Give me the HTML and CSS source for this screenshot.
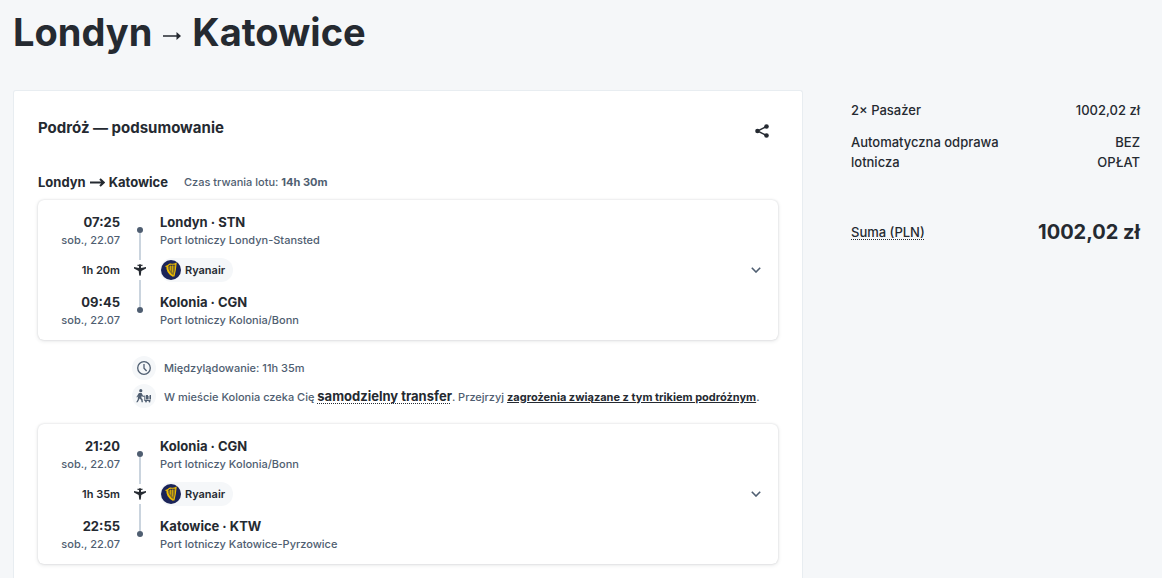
FILE: index.html
```html
<!DOCTYPE html>
<html lang="pl">
<head>
  <meta charset="UTF-8" />
  <meta name="viewport" content="width=device-width, initial-scale=1.0"/>
  <title>Londyn – Katowice</title>
  <link rel="stylesheet" href="styles.css">
</head>
<body>
  <!-- Ikony -->
  <svg class="sprite" aria-hidden="true">
    <symbol id="icon-plane" viewBox="0 0 12 12">
      <path d="M3.400 0.700h1.900L5.500 0h1l0.200 0.700h1.900v1L7 2l0.100 1.900L12 2.900v1.500L7.300 7.100 6.800 11.300 6 12l-0.800-0.700-0.500-4.200L0 4.400V2.900l4.900 1L5 2l-1.600-0.300z"/>
    </symbol>
    <symbol id="icon-harp" viewBox="0 0 20 20">
      <circle cx="10" cy="10" r="10" fill="#1b2458"/>
      <path d="M7.500 6.800c1.800-1.500 4-1.200 6.700-1.600-0.200 3.900-0.800 7-1.500 10.200-3-1.800-5.300-4.600-5.200-8.600z" fill="#857026"/>
      <path d="M4.500 6.300c1.800 0.600 2.900-2 5.100-2.100 2 0 3.300 0.500 5.400-0.800-0.300 4.700-0.900 8.800-2.100 12.900" fill="none" stroke="#edbb00" stroke-width="1.200"/>
      <path d="M6.400 6.200c-0.500 4.600 2.200 8 6.200 10" fill="none" stroke="#edbb00" stroke-width="2"/>
      <path d="M9.500 5.500v5M11.500 5.500v7" fill="none" stroke="#edbb00" stroke-width="0.700"/>
    </symbol>
    <symbol id="icon-chevron" viewBox="0 0 10 6">
      <path d="M0.800 0.800L5 5l4.200-4.200" fill="none" stroke="currentColor" stroke-width="1.600"/>
    </symbol>
  </svg>

  <main class="page">
    <h1>Londyn
      <svg class="title-arrow" viewBox="0 0 18 10" aria-hidden="true"><path d="M0 4.200h13.500V1l4.500 4-4.500 4V5.800H0z"/></svg>
      Katowice</h1>

    <div class="columns">
      <!-- Podsumowanie podróży -->
      <section class="trip">
        <header class="trip-header">
          <h2>Podróż — podsumowanie</h2>
          <button class="share" aria-label="Udostępnij">
            <svg viewBox="0 0 14 14" aria-hidden="true">
              <path d="M11.500 2.500L2.500 7l9 4.500" fill="none" stroke="currentColor" stroke-width="1.400"/>
              <circle cx="11.500" cy="2.500" r="2.300"/><circle cx="2.500" cy="7" r="2.300"/><circle cx="11.500" cy="11.500" r="2.300"/>
            </svg>
          </button>
        </header>

        <div class="route">
          <h3>Londyn
            <svg class="route-arrow" viewBox="0 0 15 9" aria-hidden="true"><path d="M0 4.500h13.500M10 1l3.700 3.500L10 8"/></svg>
            Katowice</h3>
          <p>Czas trwania lotu: <strong>14h 30m</strong></p>
        </div>

        <article class="segment">
          <div class="departure time"><b>07:25</b><span>sob., 22.07</span></div>
          <div class="departure place"><b>Londyn · STN</b><span>Port lotniczy Londyn-Stansted</span></div>
          <div class="duration">1h 20m</div>
          <div class="timeline"><i class="dot"></i><i class="line"></i><svg class="plane"><use href="#icon-plane"/></svg><i class="line"></i><i class="dot"></i></div>
          <div class="carrier"><svg><use href="#icon-harp"/></svg>Ryanair</div>
          <div class="arrival time"><b>09:45</b><span>sob., 22.07</span></div>
          <div class="arrival place"><b>Kolonia · CGN</b><span>Port lotniczy Kolonia/Bonn</span></div>
          <button class="expand" aria-label="Szczegóły lotu"><svg><use href="#icon-chevron"/></svg></button>
        </article>

        <ul class="layover">
          <li>
            <span class="badge">
              <svg viewBox="0 0 16 16" aria-hidden="true"><path d="M8 4v4.200l2.600 2.800M14.300 8A6.300 6.300 0 1 1 1.700 8a6.300 6.300 0 0 1 12.600 0z" fill="none" stroke="currentColor" stroke-width="1.300"/></svg>
            </span>
            <p>Międzylądowanie: 11h 35m</p>
          </li>
          <li>
            <span class="badge">
              <svg viewBox="0 0 16 16" aria-hidden="true">
                <circle cx="4.800" cy="2.700" r="1.600"/>
                <path d="M2.900 5h2.700l1.300 2.500 1.500 0.400v1L6.200 8.500l-0.500-0.800-0.300 2.200 1.200 1.400 0.300 3H5.600l-0.400-2.400-1.600-1.300-0.800 1.600-1.200 2.100H0.200l1.500-2.800L2.200 7.800 1.500 9.300H0.300z"/>
                <path d="M8.300 7.500h1.100V12h5.100v1H8.300zM10 7h2v4.500h-2zM12.400 8h0.800v3.500h-0.800zM13.600 7h1.400v4.500h-1.400z"/>
                <circle cx="10" cy="13.600" r="0.900"/><circle cx="13.500" cy="13.600" r="0.900"/>
              </svg>
            </span>
            <p>W mieście Kolonia czeka Cię <button class="hint">samodzielny transfer</button>. Przejrzyj <a href="#">zagrożenia związane z tym trikiem podróżnym</a>.</p>
          </li>
        </ul>

        <article class="segment">
          <div class="departure time"><b>21:20</b><span>sob., 22.07</span></div>
          <div class="departure place"><b>Kolonia · CGN</b><span>Port lotniczy Kolonia/Bonn</span></div>
          <div class="duration">1h 35m</div>
          <div class="timeline"><i class="dot"></i><i class="line"></i><svg class="plane"><use href="#icon-plane"/></svg><i class="line"></i><i class="dot"></i></div>
          <div class="carrier"><svg><use href="#icon-harp"/></svg>Ryanair</div>
          <div class="arrival time"><b>22:55</b><span>sob., 22.07</span></div>
          <div class="arrival place"><b>Katowice · KTW</b><span>Port lotniczy Katowice-Pyrzowice</span></div>
          <button class="expand" aria-label="Szczegóły lotu"><svg><use href="#icon-chevron"/></svg></button>
        </article>
      </section>

      <!-- Cena -->
      <aside class="price">
        <div class="price-row"><span>2× Pasażer</span><span>1002,02 zł</span></div>
        <div class="price-row"><span>Automatyczna odprawa lotnicza</span><span class="free">BEZ OPŁAT</span></div>
        <div class="price-total"><button class="hint">Suma (PLN)</button><strong>1002,02 zł</strong></div>
      </aside>
    </div>
  </main>
</body>
</html>
```
FILE: styles.css
```css
* {
  box-sizing: border-box;
  margin: 0;
  padding: 0;
}

body {
  font-family: Inter, "Liberation Sans", sans-serif;
  font-size: 13px;
  line-height: 20px;
  font-weight: 500;
  color: #252a31;
  background: #f5f7f9;
}

button {
  font: inherit;
  color: inherit;
  background: none;
  border: none;
  cursor: pointer;
}

svg {
  display: block;
  fill: currentColor;
}

.sprite {
  display: none;
}

.page {
  padding: 8px 22px 0 13px;
}

h1 {
  display: flex;
  align-items: center;
  gap: 11px;
  font-size: 38px;
  line-height: 48px;
  font-weight: 700;
}

.title-arrow {
  width: 18px;
  height: 10px;
  margin-top: 8px;
}

.columns {
  display: grid;
  grid-template-columns: 1fr 289px;
  gap: 48px;
  margin-top: 34px;
}

/* Karta podróży */
.trip {
  padding: 24px 24px 14px;
  background: #fff;
  border: 1px solid #e8edf1;
  border-bottom: none;
  border-radius: 3px 3px 0 0;
}

.trip-header {
  display: flex;
  justify-content: space-between;
  margin-bottom: 25px;
}

h2 {
  font-size: 15px;
  line-height: 26px;
  font-weight: 700;
}

.share {
  width: 32px;
  height: 32px;
  padding: 9px;
}

.share svg {
  width: 14px;
  height: 14px;
}

.route {
  display: flex;
  align-items: center;
  gap: 16px;
  margin-bottom: 8px;
}

h3 {
  display: flex;
  align-items: center;
  gap: 4px;
  font-size: 13px;
  font-weight: 700;
}

.route-arrow {
  width: 15px;
  height: 9px;
  fill: none;
  stroke: currentColor;
  stroke-width: 2;
}

.route p {
  font-size: 11px;
  color: #4f5e71;
}

/* Odcinek lotu */
.segment {
  display: grid;
  grid-template-columns: 82px 40px 1fr 44px;
  grid-template-rows: 36px 44px 36px;
  align-items: center;
  padding: 12px 0;
  border-radius: 6px;
  box-shadow: 0 0 2px rgba(37, 42, 49, 0.16), 0 1px 4px rgba(37, 42, 49, 0.12);
}

.departure { grid-row: 1; }
.duration, .carrier { grid-row: 2; }
.arrival { grid-row: 3; }

.time, .duration {
  grid-column: 1;
  text-align: right;
}

.place, .carrier {
  grid-column: 3;
}

.time b, .place b {
  display: block;
  font-weight: 700;
}

.time span, .place span {
  display: block;
  font-size: 11px;
  line-height: 16px;
  color: #4f5e71;
}

.duration {
  font-size: 11px;
  font-weight: 600;
}

.timeline {
  grid-column: 2;
  grid-row: 1 / 4;
  align-self: stretch;
  display: flex;
  flex-direction: column;
  align-items: center;
  padding: 15px 0;
}

.dot {
  width: 6px;
  height: 6px;
  border-radius: 50%;
  background: #4f5e71;
}

.line {
  flex: 1;
  width: 2px;
  background: #cad4de;
}

.plane {
  width: 12px;
  height: 12px;
  margin: 4px 0;
}

.carrier {
  justify-self: start;
  display: flex;
  align-items: center;
  gap: 4px;
  height: 24px;
  padding: 0 8px 0 1px;
  border-radius: 12px;
  background: #f5f7f9;
  font-size: 11px;
  font-weight: 600;
}

.carrier svg {
  width: 20px;
  height: 20px;
}

.expand {
  grid-column: 4;
  grid-row: 2;
  display: flex;
  justify-content: center;
  padding: 8px 0;
  color: #4f5e71;
}

.expand svg {
  width: 10px;
  height: 6px;
}

/* Przesiadka */
.layover {
  display: flex;
  flex-direction: column;
  gap: 4px;
  padding: 16px 0 16px 94px;
  list-style: none;
  font-size: 11px;
  color: #4f5e71;
}

.layover li {
  display: flex;
  align-items: center;
  gap: 8px;
}

.badge {
  display: flex;
  flex-shrink: 0;
  justify-content: center;
  align-items: center;
  width: 24px;
  height: 24px;
  border-radius: 50%;
  background: #f5f7f9;
}

.badge svg {
  width: 16px;
  height: 16px;
}

.hint {
  text-decoration: underline dotted 1px;
  text-underline-offset: 2px;
  text-decoration-skip-ink: none;
}

.layover .hint {
  font-size: 13px;
  font-weight: 700;
  color: #252a31;
}

.layover a {
  font-weight: 700;
  color: #252a31;
}

/* Cena */
.price {
  padding-top: 10px;
}

.price-row {
  display: flex;
  justify-content: space-between;
  margin-bottom: 12px;
}

.price-row span:first-child {
  max-width: 170px;
}

.price-row .free {
  width: 50px;
  text-align: right;
}

.price-total {
  display: flex;
  justify-content: space-between;
  align-items: center;
  margin-top: 46px;
}

.price-total strong {
  font-size: 20px;
  line-height: 28px;
}
```
